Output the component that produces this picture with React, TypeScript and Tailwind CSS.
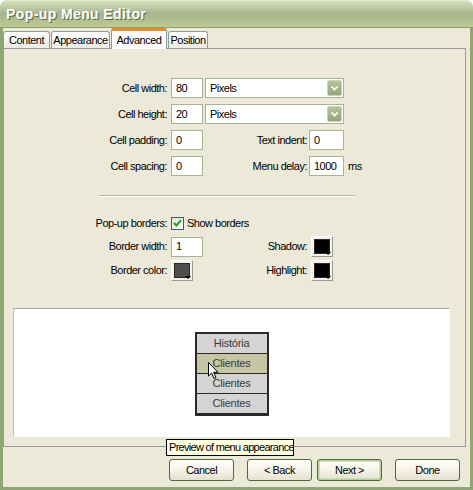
import React from 'react';

const TextBox = ({ value, w = 'w-[32px]' }: { value: string; w?: string }) => (
  <div className={`${w} h-[20px] border border-[#a5b592] bg-white flex items-center pl-[4px]`}>{value}</div>
);

const Select = ({ value }: { value: string }) => (
  <div className="w-[139px] h-[20px] ml-[2px] border border-[#a5b592] bg-white flex items-center justify-between pl-[4px] pr-[1px]">
    <span>{value}</span>
    <div className="w-[15px] h-[16px] rounded-[2px] bg-gradient-to-b from-[#b6c39c] to-[#95a47a] border border-[#c9d3b4] flex items-center justify-center">
      <svg width="7" height="5" viewBox="0 0 7 5">
        <path d="M0.5 0.5 L3.5 3.5 L6.5 0.5" fill="none" stroke="#fff" strokeWidth="1.6" />
      </svg>
    </div>
  </div>
);

const Swatch = ({ color }: { color: string }) => (
  <div className="relative w-[22px] h-[21px] bg-[#f4f2ea] border border-t-white border-l-white border-r-[#9d9a8a] border-b-[#9d9a8a] flex items-center justify-center">
    <div className="w-[16px] h-[15px] border border-[#2b2b2b] -mt-[1px] -ml-[1px]" style={{ background: color }} />
    <div className="absolute right-[1px] bottom-[1px] w-0 h-0 border-l-[3px] border-r-[3px] border-t-[3px] border-l-transparent border-r-transparent border-t-black" />
  </div>
);

const Label = ({ children, w = 'w-[163px]' }: { children: React.ReactNode; w?: string }) => (
  <div className={`${w} text-right mr-[4px] shrink-0`}>{children}</div>
);

const Tab = ({ label, w, active }: { label: string; w: string; active?: boolean }) =>
  active ? (
    <div className={`${w} h-[21px] -mb-px relative z-10 bg-[#fcfcfe] border-x border-[#919b9c] border-t-[3px] border-t-[#e68b2c] rounded-t-[3px] flex items-center justify-center`}>
      {label}
    </div>
  ) : (
    <div className={`${w} h-[17px] bg-gradient-to-b from-white to-[#ecebe5] border border-b-0 border-[#919b9c] rounded-t-[3px] flex items-center justify-center`}>
      {label}
    </div>
  );

const Button = ({ label, def, ml }: { label: string; def?: boolean; ml: string }) => (
  <div className={`${ml} w-[65px] h-[22px] rounded-[3px] border border-[#4e6b37] bg-gradient-to-b from-[#fffffa] via-[#f6f4ea] to-[#e4e1d0] flex items-center justify-center ${def ? 'shadow-[inset_0_0_0_1px_#b9cf9c,inset_0_0_0_2px_#cfdcb8]' : ''}`}>
    {label}
  </div>
);

const MenuRow = ({ label, hover }: { label: string; hover?: boolean }) => (
  <div className={`h-[20px] flex items-center justify-center text-[#3a3a3a] ${hover ? 'bg-[#c6c6a4]' : 'bg-[#d4d4d4]'}`}>{label}</div>
);

export default function App() {
  return (
    <div className="w-[473px] h-[490px] relative flex flex-col bg-[#ece9d8] text-[11px] tracking-[-0.5px] text-black font-['Liberation_Sans',Arial,sans-serif] overflow-hidden rounded-t-[7px]">
      {/* Title bar */}
      <div className="h-[28px] shrink-0 flex items-center pl-[6px] bg-gradient-to-b from-[#d6e0bb] via-[#a7b48c] to-[#bfcb94] border-t border-[#e4ecd0] border-b border-b-[#8aa068]">
        <span className="text-white font-bold text-[14px] tracking-[0.4px] [text-shadow:1px_1px_0_#5a6a40]">Pop-up Menu Editor</span>
      </div>

      <div className="flex-1 flex flex-col border-x-[3px] border-b-[3px] border-[#8fa873]">
        {/* Tabs */}
        <div className="h-[20px] flex items-end gap-[1px]">
          <Tab label="Content" w="w-[47px]" />
          <Tab label="Appearance" w="w-[59px]" />
          <Tab label="Advanced" w="w-[56px]" active />
          <Tab label="Position" w="w-[40px]" />
        </div>

        {/* Panel */}
        <div className="h-[399px] mr-[4px] border border-[#919b9c] flex flex-col pt-[29px]">
          <div className="flex items-center h-[20px]">
            <Label>Cell width:</Label>
            <TextBox value="80" />
            <Select value="Pixels" />
          </div>
          <div className="flex items-center h-[20px] mt-[6px]">
            <Label>Cell height:</Label>
            <TextBox value="20" />
            <Select value="Pixels" />
          </div>
          <div className="flex items-center h-[20px] mt-[6px]">
            <Label>Cell padding:</Label>
            <TextBox value="0" />
            <Label w="w-[104px]">Text indent:</Label>
            <TextBox value="0" w="w-[35px] -ml-[2px]" />
          </div>
          <div className="flex items-center h-[20px] mt-[6px]">
            <Label>Cell spacing:</Label>
            <TextBox value="0" />
            <Label w="w-[104px]">Menu delay:</Label>
            <TextBox value="1000" w="w-[35px] -ml-[2px]" />
            <span className="ml-[4px]">ms</span>
          </div>

          <div className="ml-[95px] w-[256px] mt-[19px] border-t border-[#b3b09f] border-b border-b-white" />

          <div className="flex items-center h-[14px] mt-[19px]">
            <Label>Pop-up borders:</Label>
            <div className="w-[13px] h-[13px] border border-[#3d5873] bg-gradient-to-br from-[#e4e3dc] to-white flex items-center justify-center">
              <svg width="9" height="8" viewBox="0 0 9 8">
                <path d="M1 4 L3.4 6.5 L8 1.2" fill="none" stroke="#21a121" strokeWidth="2" />
              </svg>
            </div>
            <span className="ml-[3px]">Show borders</span>
          </div>
          <div className="flex items-center h-[21px] mt-[6px]">
            <Label>Border width:</Label>
            <TextBox value="1" />
            <Label w="w-[104px]">Shadow:</Label>
            <Swatch color="#000" />
          </div>
          <div className="flex items-center h-[21px] mt-[3px]">
            <Label>Border color:</Label>
            <div className="w-[32px]">
              <Swatch color="#4f4f4f" />
            </div>
            <Label w="w-[104px]">Highlight:</Label>
            <Swatch color="#000" />
          </div>

          {/* Preview */}
          <div className="ml-[9px] w-[437px] h-[129px] mt-[27px] bg-white border border-t-[#a7a595] border-l-[#c2c0b2] border-r-white border-b-white flex items-center justify-center">
            <div className="relative w-[74px] mt-[3px] border-2 border-[#2a2a2a] flex flex-col divide-y divide-[#2a2a2a] tracking-[-0.2px]">
              <MenuRow label="História" />
              <MenuRow label="Clientes" hover />
              <MenuRow label="Clientes" />
              <MenuRow label="Clientes" />
              <svg className="absolute left-[11px] top-[28px]" width="11" height="18" viewBox="0 0 11 18">
                <path d="M0.5 0.5 L0.5 14 L3.6 11 L6 16.5 L8 15.6 L5.6 10.3 L10 10.3 Z" fill="#fff" stroke="#000" strokeWidth="1" />
              </svg>
            </div>
          </div>
        </div>

        {/* Buttons */}
        <div className="flex mt-[12px]">
          <Button label="Cancel" ml="ml-[166px]" />
          <Button label="< Back" ml="ml-[13px]" />
          <Button label="Next >" ml="ml-[5px]" def />
          <Button label="Done" ml="ml-[13px]" />
        </div>
      </div>

      {/* Tooltip */}
      <div className="absolute left-[166px] top-[439px] w-[128px] h-[17px] bg-[#ffffe1] border border-black flex items-center pl-[2px] whitespace-nowrap tracking-[-0.7px] overflow-hidden">
        Preview of menu appearance
      </div>
    </div>
  );
}
